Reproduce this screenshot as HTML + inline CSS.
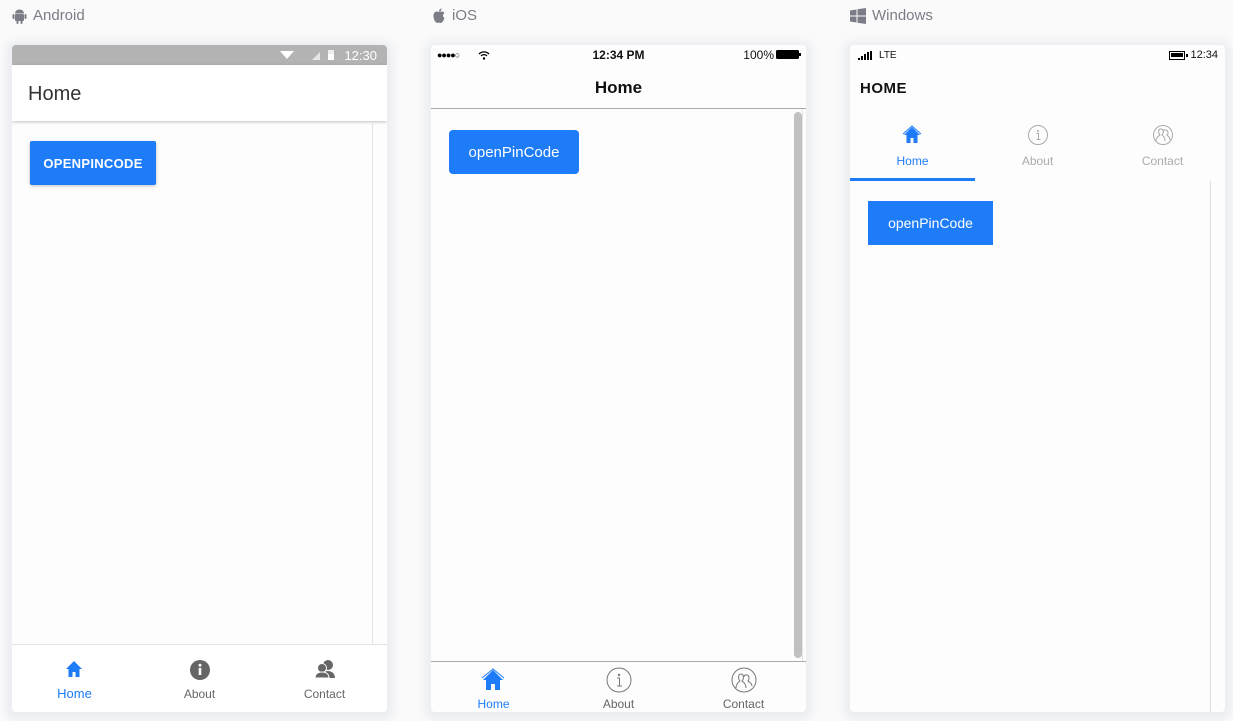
<!DOCTYPE html>
<html><head><meta charset="utf-8"><style>
*{margin:0;padding:0;box-sizing:border-box}
body{width:1233px;height:721px;background:#fafafb;font-family:"Liberation Sans",sans-serif;position:relative;overflow:hidden}
.abs{position:absolute}
.lbl{position:absolute;top:7px;font-size:15px;color:#7a7d85;display:flex;align-items:center;gap:6px}
.frame{position:absolute;top:45px;width:375px;height:667px;background:#fdfdfd;border-radius:4px;box-shadow:0 2px 8px 6px rgba(225,228,235,.6);overflow:hidden}
.btn{position:absolute;background:#1e7cf8;color:#fff;display:flex;align-items:center;justify-content:center}
.tab{position:absolute;text-align:center;width:125px;font-size:12px;color:#666}
</style></head><body>

<div class="lbl" style="left:12px"><svg width="15" height="16" viewBox="0 0 15 16"><rect x="3" y="6" width="9" height="7" rx="1" fill="#7a7d85"/><path d="M3 5.5a4.5 4 0 0 1 9 0z" fill="#7a7d85"/><rect x="0.5" y="6" width="2" height="5" rx="1" fill="#7a7d85"/><rect x="12.5" y="6" width="2" height="5" rx="1" fill="#7a7d85"/><rect x="4.5" y="12" width="2" height="4" rx="1" fill="#7a7d85"/><rect x="8.5" y="12" width="2" height="4" rx="1" fill="#7a7d85"/></svg>Android</div>
<div class="lbl" style="left:432px"><svg width="14" height="16" viewBox="0 0 14 16"><path d="M7 4C5 3 2 3.5 1.5 7c-.4 3 1.5 8 4 8 1 0 1-.5 1.5-.5s.5.5 1.5.5c2 0 3.5-3.5 4-5-2-1-2-4 0-5C11 3 8.5 3.5 7 4z" fill="#7a7d85"/><path d="M7 3.5C7 2 8 .5 9.5.5 9.5 2 8.5 3.5 7 3.5z" fill="#7a7d85"/></svg>iOS</div>
<div class="lbl" style="left:850px"><svg width="16" height="16" viewBox="0 0 16 16" fill="#7a7d85"><path d="M0 2.5l6.5-1v6H0zM7.5 1.3L16 0v7.5H7.5zM0 8.5h6.5v6L0 13.5zM7.5 8.5H16V16l-8.5-1.3z"/></svg>Windows</div>

<!-- Android -->
<div class="frame" style="left:12px">
 <div class="abs" style="left:0;top:0;width:375px;height:20px;background:#b3b3b3"></div>
 <svg class="abs" style="left:268px;top:4px" width="60" height="12"><path d="M0 2h14l-7 8z" fill="#fff"/><path d="M32 11h8V3z" fill="#e6e6e6"/><rect x="48" y="1" width="6" height="10" fill="#eee"/><rect x="48" y="5" width="6" height="6" fill="#fff"/></svg>
 <div class="abs" style="right:10px;top:3px;font-size:13px;color:#fff">12:30</div>
 <div class="abs" style="left:0;top:20px;width:375px;height:56px;background:#fff;box-shadow:0 1px 3px rgba(0,0,0,.25)"></div>
 <div class="abs" style="left:16px;top:38px;font-size:20px;color:#333">Home</div>
 <div class="abs" style="left:360px;top:78px;width:1px;height:521px;background:#e4e4e4"></div>
 <div class="btn" style="left:18px;top:96px;width:126px;height:44px;border-radius:2px;font-size:13px;font-weight:600;letter-spacing:.3px;box-shadow:0 1px 3px rgba(0,0,0,.25)">OPENPINCODE</div>
 <div class="abs" style="left:0;top:599px;width:375px;height:68px;background:#fff;border-top:1px solid #e2e2e2"></div>
 <svg class="abs" style="left:53px;top:615px" width="18" height="18" viewBox="0 0 18 18"><path d="M9 1L1 9h2.5v8h4v-5h3v5h4V9H17z" fill="#1e7cf8"/></svg>
 <div class="tab" style="left:0;top:641px;font-size:13px;color:#1e7cf8">Home</div>
 <svg class="abs" style="left:178px;top:615px" width="20" height="20"><circle cx="10" cy="10" r="10" fill="#666"/><rect x="8.7" y="8" width="2.6" height="7" fill="#fff"/><circle cx="10" cy="5.3" r="1.5" fill="#fff"/></svg>
 <div class="tab" style="left:125px;top:642px">About</div>
 <svg class="abs" style="left:302px;top:614px" width="22" height="20" viewBox="0 0 22 20" fill="#666"><circle cx="14" cy="6" r="5"/><path d="M8 19c0-5 3-7 6-7s7 2 7 7z"/><circle cx="8" cy="9" r="4.5" stroke="#fff" stroke-width="1"/><path d="M1 19c0-4 3-6 7-6s7 2 7 6z" stroke="#fff" stroke-width="1"/></svg>
 <div class="tab" style="left:250px;top:642px">Contact</div>
</div>

<!-- iOS -->
<div class="frame" style="left:431px">
 <div class="abs" style="left:6px;top:5px;font-size:9px;letter-spacing:-1px">●●●●○</div>
 <svg class="abs" style="left:47px;top:5px" width="12" height="10" viewBox="0 0 12 10"><path d="M1 4a7 7 0 0 1 10 0M3 6a4 4 0 0 1 6 0" stroke="#000" stroke-width="1.3" fill="none"/><circle cx="6" cy="8.5" r="1.2"/></svg>
 <div class="abs" style="left:0;width:375px;top:3px;text-align:center;font-size:12px;font-weight:bold;color:#111">12:34 PM</div>
 <div class="abs" style="right:32px;top:3px;font-size:12px;color:#111">100%</div>
 <div class="abs" style="right:7px;top:5px;width:23px;height:9px;background:#000;border-radius:1.5px"></div>
 <div class="abs" style="right:5px;top:8px;width:2px;height:3px;background:#000"></div>
 <div class="abs" style="left:0;width:375px;top:33px;text-align:center;font-size:17px;font-weight:bold;color:#111">Home</div>
 <div class="abs" style="left:0;top:63px;width:375px;height:1px;background:#aaa"></div>
 <div class="abs" style="left:371px;top:64px;width:1px;height:552px;background:#e4e4e4"></div>
 <div class="abs" style="left:363px;top:67px;width:8px;height:546px;background:#c1c1c1;border-radius:4px"></div>
 <div class="btn" style="left:18px;top:85px;width:130px;height:44px;border-radius:4px;font-size:15px">openPinCode</div>
 <div class="abs" style="left:0;top:616px;width:375px;height:1px;background:#aaa"></div>
 <svg class="abs" style="left:50px;top:623px" width="24" height="24" viewBox="0 0 24 24"><path d="M12 2L2 12h3v10h5v-6h4v6h5V12h3z" fill="#1e7cf8"/><path d="M1 10L12 1l11 9" stroke="#1e7cf8" stroke-width="1" fill="none"/></svg>
 <div class="tab" style="left:0;top:652px;color:#1e7cf8">Home</div>
 <svg class="abs" style="left:175px;top:622px" width="26" height="26"><circle cx="13" cy="13" r="12" stroke="#777" fill="none"/><circle cx="13" cy="8" r="1.2" fill="#777"/><path d="M11 11h2.5v8M11 19h5" stroke="#777" fill="none"/></svg>
 <div class="tab" style="left:125px;top:652px">About</div>
 <svg class="abs" style="left:300px;top:622px" width="26" height="26"><circle cx="13" cy="13" r="12" stroke="#777" fill="none"/><path d="M5 21c0-5 3-6 4-7-2-2-2-7 1-7s3 5 1 7c1 1 4 2 4 7M13 10c0-3 5-3 5 1 0 2-1 3-1 3 1 1 4 2 4 5" stroke="#777" fill="none"/></svg>
 <div class="tab" style="left:250px;top:652px">Contact</div>
</div>

<!-- Windows -->
<div class="frame" style="left:850px">
 <svg class="abs" style="left:8px;top:6px" width="16" height="9"><rect x="0" y="7" width="2" height="2"/><rect x="3" y="5" width="2" height="4"/><rect x="6" y="3" width="2" height="6"/><rect x="9" y="1" width="2" height="8"/><rect x="12" y="0" width="2" height="9"/></svg>
 <div class="abs" style="left:29px;top:5px;font-size:10px;color:#111">LTE</div>
 <div class="abs" style="left:319px;top:6px;width:16px;height:9px;border:1.3px solid #000"><div style="margin:1px;height:4px;background:#000"></div></div>
 <div class="abs" style="left:336px;top:9px;width:2px;height:3px;background:#000"></div>
 <div class="abs" style="right:7px;top:4px;font-size:11px;color:#111">12:34</div>
 <div class="abs" style="left:10px;top:35px;font-size:15px;font-weight:bold;color:#111;letter-spacing:.5px">HOME</div>
 <svg class="abs" style="left:52px;top:80px" width="20" height="20" viewBox="0 0 20 20"><path d="M10 2L2 10h2.5v8h4v-5h3v5h4v-8H18z" fill="#1e7cf8"/><path d="M1 9l9-8 9 8" stroke="#1e7cf8" fill="none"/></svg>
 <div class="tab" style="left:0;top:109px;color:#1e7cf8">Home</div>
 <div class="abs" style="left:0;top:133px;width:125px;height:3px;background:#1e7cf8"></div>
 <svg class="abs" style="left:177px;top:79px" width="22" height="22"><circle cx="11" cy="11" r="9.5" stroke="#aaa" fill="none"/><circle cx="11" cy="7" r="1" fill="#aaa"/><path d="M9.5 9.5h2v6M9.5 15.5h4" stroke="#aaa" fill="none"/></svg>
 <div class="tab" style="left:125px;top:109px;color:#aaa">About</div>
 <svg class="abs" style="left:302px;top:79px" width="22" height="22"><circle cx="11" cy="11" r="9.5" stroke="#aaa" fill="none"/><path d="M4 17c0-4 3-5 4-6-2-2-2-6 1-6s3 4 1 6c1 1 3 2 3 6M11 8c0-3 5-3 5 1 0 2-1 2-1 2 1 1 3 2 3 5" stroke="#aaa" fill="none"/></svg>
 <div class="tab" style="left:250px;top:109px;color:#aaa">Contact</div>
 <div class="abs" style="left:360px;top:136px;width:1px;height:531px;background:#ddd"></div>
 <div class="btn" style="left:18px;top:156px;width:125px;height:44px;font-size:14px">openPinCode</div>
</div>
</body></html>
